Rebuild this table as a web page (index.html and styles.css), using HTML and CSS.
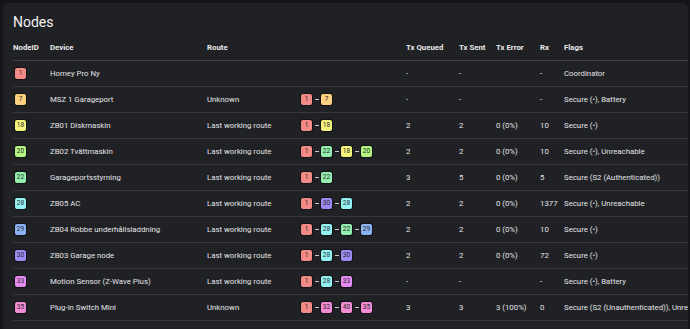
FILE: index.html
```html
<!DOCTYPE html>
<html lang="en">
<head>
    <meta charset="UTF-8">
    <meta name="viewport" content="width=device-width, initial-scale=1.0">
    <title>Nodes</title>
    <link rel="stylesheet" href="styles.css">
</head>
<body>
    <div class="card">
        <h1>Nodes</h1>
        <table class="nodes">
            <colgroup>
                <col class="c-id"><col class="c-dev"><col class="c-route"><col class="c-path">
                <col class="c-q"><col class="c-sent"><col class="c-err"><col class="c-rx"><col class="c-flags">
            </colgroup>
            <thead>
                <tr>
                    <th>NodeID</th><th>Device</th><th>Route</th><th></th>
                    <th>Tx Queued</th><th>Tx Sent</th><th>Tx Error</th><th>Rx</th><th>Flags</th>
                </tr>
            </thead>
            <tbody>
                <tr>
                    <td><span class="badge n1">1</span></td><td>Homey Pro Ny</td><td></td><td></td>
                    <td>-</td><td>-</td><td></td><td>-</td><td>Coordinator</td>
                </tr>
                <tr>
                    <td><span class="badge n7">7</span></td><td>MSZ 1 Garageport</td><td>Unknown</td>
                    <td><span class="badge n1">1</span><span class="dash"></span><span class="badge n7">7</span></td>
                    <td>-</td><td>-</td><td></td><td>-</td><td>Secure (•), Battery</td>
                </tr>
                <tr>
                    <td><span class="badge n18">18</span></td><td>ZB01 Diskmaskin</td><td>Last working route</td>
                    <td><span class="badge n1">1</span><span class="dash"></span><span class="badge n18">18</span></td>
                    <td>2</td><td>2</td><td>0 (0%)</td><td>10</td><td>Secure (•)</td>
                </tr>
                <tr>
                    <td><span class="badge n20">20</span></td><td>ZB02 Tvättmaskin</td><td>Last working route</td>
                    <td><span class="badge n1">1</span><span class="dash"></span><span class="badge n22">22</span><span class="dash"></span><span class="badge n18">18</span><span class="dash"></span><span class="badge n20">20</span></td>
                    <td>2</td><td>2</td><td>0 (0%)</td><td>10</td><td>Secure (•), Unreachable</td>
                </tr>
                <tr>
                    <td><span class="badge n22">22</span></td><td>Garageportsstyrning</td><td>Last working route</td>
                    <td><span class="badge n1">1</span><span class="dash"></span><span class="badge n22">22</span></td>
                    <td>3</td><td>5</td><td>0 (0%)</td><td>5</td><td>Secure (S2 (Authenticated))</td>
                </tr>
                <tr>
                    <td><span class="badge n28">28</span></td><td>ZB05 AC</td><td>Last working route</td>
                    <td><span class="badge n1">1</span><span class="dash"></span><span class="badge n30">30</span><span class="dash"></span><span class="badge n28">28</span></td>
                    <td>2</td><td>2</td><td>0 (0%)</td><td>1377</td><td>Secure (•), Unreachable</td>
                </tr>
                <tr>
                    <td><span class="badge n29">29</span></td><td>ZB04 Robbe underhållsladdning</td><td>Last working route</td>
                    <td><span class="badge n1">1</span><span class="dash"></span><span class="badge n28">28</span><span class="dash"></span><span class="badge n22">22</span><span class="dash"></span><span class="badge n29">29</span></td>
                    <td>2</td><td>2</td><td>0 (0%)</td><td>10</td><td>Secure (•)</td>
                </tr>
                <tr>
                    <td><span class="badge n30">30</span></td><td>ZB03 Garage node</td><td>Last working route</td>
                    <td><span class="badge n1">1</span><span class="dash"></span><span class="badge n28">28</span><span class="dash"></span><span class="badge n30">30</span></td>
                    <td>2</td><td>2</td><td>0 (0%)</td><td>72</td><td>Secure (•)</td>
                </tr>
                <tr>
                    <td><span class="badge n33">33</span></td><td>Motion Sensor (Z-Wave Plus)</td><td>Last working route</td>
                    <td><span class="badge n1">1</span><span class="dash"></span><span class="badge n28">28</span><span class="dash"></span><span class="badge n33">33</span></td>
                    <td>-</td><td>-</td><td></td><td>-</td><td>Secure (•), Battery</td>
                </tr>
                <tr>
                    <td><span class="badge n35">35</span></td><td>Plug-in Switch Mini</td><td>Unknown</td>
                    <td><span class="badge n1">1</span><span class="dash"></span><span class="badge n32">32</span><span class="dash"></span><span class="badge n40">40</span><span class="dash"></span><span class="badge n35">35</span></td>
                    <td>3</td><td>3</td><td>3 (100%)</td><td>0</td><td>Secure (S2 (Unauthenticated)), Unreachable</td>
                </tr>
            </tbody>
        </table>
    </div>
</body>
</html>
```

FILE: styles.css
```css
html, body {
    margin: 0;
    height: 100%;
    overflow: hidden;
}
body {
    background: #141519;
    font-family: Roboto, "Liberation Sans", sans-serif;
    color: #e3e3e5;
    padding: 3px 2px 0 3px;
    box-sizing: border-box;
}
.card {
    background: #202125;
    border-radius: 6px 6px 0 0;
    height: 340px;
    padding: 0 0 0 10px;
    overflow: hidden;
}
h1 {
    margin: 0;
    padding: 11px 0 0 0;
    height: 20px;
    font-size: 14px;
    font-weight: 400;
    color: #f2f2f2;
    line-height: 16px;
}
.nodes {
    border-collapse: collapse;
    table-layout: fixed;
    width: 800px;
    font-size: 7.8px;
}
.c-id { width: 37px; }
.c-dev { width: 157px; }
.c-route { width: 94px; }
.c-path { width: 105px; }
.c-q { width: 53px; }
.c-sent { width: 37px; }
.c-err { width: 44px; }
.c-rx { width: 24px; }
.c-flags { width: 249px; }
th {
    text-align: left;
    font-weight: 700;
    color: #e8e8ea;
    height: 26px;
    padding: 0;
    border-bottom: 1px solid #3d3e42;
    white-space: nowrap;
}
td {
    padding: 0;
    height: 25px;
    border-bottom: 1px solid #36373b;
    white-space: nowrap;
    vertical-align: middle;
}
.badge {
    display: inline-block;
    vertical-align: middle;
    box-sizing: border-box;
    min-width: 11px;
    height: 11px;
    padding: 0 1px;
    line-height: 11px;
    text-align: center;
    font-size: 6.5px;
    color: #2a2a2a;
    border-radius: 2px;
    box-shadow: 0 0 0 1px #121316;
}
td:first-child .badge { margin-left: 2px; }
.dash {
    display: inline-block;
    vertical-align: middle;
    width: 4px;
    height: 1px;
    margin: 0 2.5px;
    background: #c8c8c8;
}
.n1 { background: #f28b86; }
.n7 { background: #fdd080; }
.n18 { background: #f3f37d; }
.n20 { background: #b5f582; }
.n22 { background: #94eeae; }
.n28 { background: #93f3f3; }
.n29 { background: #8cb4f5; }
.n30 { background: #9d8bf3; }
.n33 { background: #e48cf2; }
.n32, .n35, .n40 { background: #f48cd6; }
```
